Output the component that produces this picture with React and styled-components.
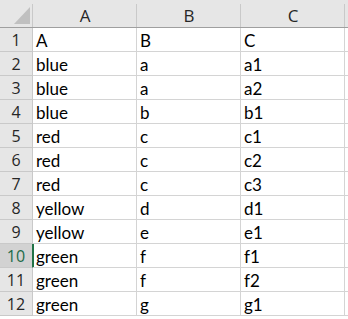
import React from "react";
import styled, { createGlobalStyle, css } from "styled-components";

const Global = createGlobalStyle`
  html, body { margin: 0; padding: 0; background: #fff; }
  body { width: 348px; height: 319px; overflow: hidden; }
`;

const Sheet = styled.div`
  display: grid;
  grid-template-columns: 33px 104px 104px 104px 1fr;
  grid-template-rows: 28px;
  grid-auto-rows: 24px;
  width: 348px;
`;

const headerBg = css`
  background:
    linear-gradient(to bottom, transparent 4px, #c9c9c9 4px) right top / 1px 100% no-repeat,
    #e6e6e6;
`;

const Corner = styled.div`
  ${headerBg};
  border-bottom: 1px solid #9f9f9f;
  display: flex;
  align-items: flex-end;
  justify-content: flex-end;
  padding: 0 3px 3px 0;
  box-sizing: border-box;
  svg { display: block; }
`;

const ColHead = styled.div`
  ${headerBg};
  border-bottom: 1px solid #9f9f9f;
  box-sizing: border-box;
  display: flex;
  align-items: center;
  justify-content: center;
  padding-top: 3px;
  font-family: "Open Sans", "Noto Sans", sans-serif;
  font-size: 17px;
  color: #262626;
`;

const HeadFill = styled.div`
  background: #e6e6e6;
  border-bottom: 1px solid #9f9f9f;
  box-sizing: border-box;
`;

const RowHead = styled.div`
  background: ${(p) => (p.$active ? "#d2d2d2" : "#e6e6e6")};
  border-right: 1px solid ${(p) => (p.$active ? "#217346" : "#c9c9c9")};
  border-bottom: 1px solid #c9c9c9;
  box-sizing: border-box;
  display: flex;
  align-items: center;
  justify-content: center;
  padding-top: 1px;
  font-family: "Open Sans", "Noto Sans", sans-serif;
  font-size: 16px;
  color: ${(p) => (p.$active ? "#1d6b49" : "#262626")};
`;

const Cell = styled.div`
  border-right: 1px solid #d4d4d4;
  border-bottom: 1px solid #d4d4d4;
  box-sizing: border-box;
  display: flex;
  align-items: center;
  padding-left: 3px;
  padding-top: 1px;
  font-family: "Lato", "Liberation Sans", sans-serif;
  font-size: 17px;
  color: #000;
  white-space: nowrap;
  overflow: hidden;
  ${(p) => p.$active && css`box-shadow: inset 1px 0 0 #217346;`}
`;

const Fill = styled.div`
  border-bottom: 1px solid #d4d4d4;
  box-sizing: border-box;
`;

const rows = [
  ["A", "B", "C"],
  ["blue", "a", "a1"],
  ["blue", "a", "a2"],
  ["blue", "b", "b1"],
  ["red", "c", "c1"],
  ["red", "c", "c2"],
  ["red", "c", "c3"],
  ["yellow", "d", "d1"],
  ["yellow", "e", "e1"],
  ["green", "f", "f1"],
  ["green", "f", "f2"],
  ["green", "g", "g1"],
];

export default function App() {
  return (
    <>
      <Global />
      <Sheet>
        <Corner>
          <svg width="16" height="17" viewBox="0 0 16 17">
            <polygon points="0,17 16,17 16,0" fill="#c0c0c0" />
          </svg>
        </Corner>
        {["A", "B", "C"].map((c) => (
          <ColHead key={c}>{c}</ColHead>
        ))}
        <HeadFill />
        {rows.map((r, i) => {
          const active = i === 9;
          return (
            <React.Fragment key={i}>
              <RowHead $active={active}>{i + 1}</RowHead>
              {r.map((v, j) => (
                <Cell key={j} $active={active && j === 0}>
                  {v}
                </Cell>
              ))}
              <Fill />
            </React.Fragment>
          );
        })}
      </Sheet>
    </>
  );
}
